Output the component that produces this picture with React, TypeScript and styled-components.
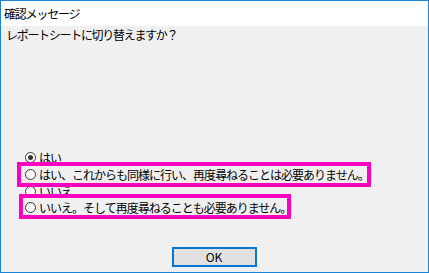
import React from "react";
import styled, { createGlobalStyle } from "styled-components";

const Global = createGlobalStyle`
  html, body { margin: 0; padding: 0; background: #ffffff; }
  * { box-sizing: border-box; }
`;

const FONT = `"Noto Sans CJK JP", "Noto Sans", sans-serif`;

const Window = styled.div`
  width: 429px;
  height: 273px;
  border: 1px solid #1883d7;
  display: flex;
  flex-direction: column;
  font-family: ${FONT};
  color: #000;
  overflow: hidden;
`;

const TitleBar = styled.div`
  height: 25px;
  flex: none;
  background: #ffffff;
  display: flex;
  align-items: center;
  padding-left: 3px;
  font-size: 12px;
  letter-spacing: -1.2px;
`;

const Body = styled.div`
  flex: 1;
  background: #f0f0f0;
  display: flex;
  flex-direction: column;
  padding: 1px 5px 5px 5px;
`;

const Question = styled.div`
  font-size: 12px;
  line-height: 16px;
  letter-spacing: -1.3px;
`;

const RadioGroup = styled.div`
  position: relative;
  margin-top: 105px;
  display: flex;
  flex-direction: column;
`;

const Row = styled.label<{ $h: number }>`
  height: ${(p) => p.$h}px;
  display: flex;
  align-items: center;
  gap: 3px;
  padding-left: 19px;
  font-size: 12px;
  letter-spacing: -1px;
  white-space: nowrap;
`;

const Circle = styled.span<{ $on?: boolean }>`
  width: 11px;
  height: 11px;
  flex: none;
  border-radius: 50%;
  border: 1px solid #333333;
  background: #ffffff;
  display: flex;
  align-items: center;
  justify-content: center;
  &::after {
    content: "";
    display: ${(p) => (p.$on ? "block" : "none")};
    width: 5px;
    height: 5px;
    border-radius: 50%;
    background: #333333;
  }
`;

const Highlight = styled.div<{ $l: number; $t: number; $w: number; $h: number }>`
  position: absolute;
  left: ${(p) => p.$l}px;
  top: ${(p) => p.$t}px;
  width: ${(p) => p.$w}px;
  height: ${(p) => p.$h}px;
  border: 4px solid #ff00c0;
  pointer-events: none;
`;

const Footer = styled.div`
  margin-top: auto;
  display: flex;
  justify-content: center;
  padding-right: 1px;
`;

const OkButton = styled.button`
  width: 85px;
  height: 20px;
  border: 2px solid #0078d7;
  background: #e1e1e1;
  font-family: ${FONT};
  font-size: 12px;
  color: #000;
  padding: 0;
  line-height: 16px;
`;

const options = [
  { text: "はい", on: true, h: 18 },
  { text: "はい、これからも同様に行い、再度尋ねることは必要ありません。", on: false, h: 17 },
  { text: "いいえ", on: false, h: 16 },
  { text: "いいえ。そして再度尋ねることも必要ありません。", on: false, h: 17 },
];

export default function App() {
  return (
    <>
      <Global />
      <Window>
        <TitleBar>確認メッセージ</TitleBar>
        <Body>
          <Question>レポートシートに切り替えますか？</Question>
          <RadioGroup>
            {options.map((o, i) => (
              <Row key={i} $h={o.h}>
                <Circle $on={o.on} />
                <span>{o.text}</span>
              </Row>
            ))}
            <Highlight $l={11} $t={14} $w={354} $h={25} />
            <Highlight $l={13} $t={46} $w={272} $h={25} />
          </RadioGroup>
          <Footer>
            <OkButton>OK</OkButton>
          </Footer>
        </Body>
      </Window>
    </>
  );
}
